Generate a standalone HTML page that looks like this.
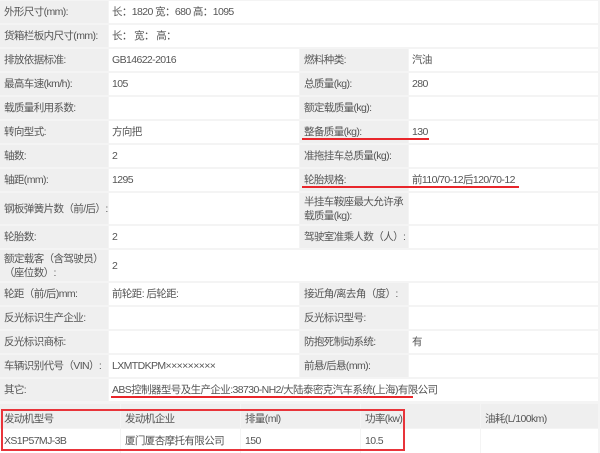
<!DOCTYPE html>
<html><head><meta charset="utf-8"><style>
body{margin:0;width:600px;height:453px;overflow:hidden;background:#f4f4f4;font-family:"Liberation Sans","Noto Sans CJK SC",sans-serif;font-size:10.5px;letter-spacing:-0.6px;color:#555;position:relative}
.c{position:absolute;box-sizing:border-box;padding-left:4px;display:flex;align-items:center;line-height:14px;white-space:nowrap;overflow:hidden}
.l{background:#efefef}
.v{background:#fff;padding-left:3px}
.h{padding-top:5px}
.r{position:absolute;background:#e8262b}
.box{position:absolute;border:2px solid #e8343a;box-sizing:border-box}
</style></head><body>
<div class="c l" style="left:0;top:1px;width:108px;height:22px">外形尺寸(mm):</div>
<div class="c v" style="left:109px;top:1px;width:489px;height:22px">长：1820 宽：680 高：1095</div>
<div class="c l" style="left:0;top:25px;width:108px;height:22px">货箱栏板内尺寸(mm):</div>
<div class="c v" style="left:109px;top:25px;width:489px;height:22px">长： 宽： 高：</div>

<div class="c l" style="left:0;top:49px;width:108px;height:22px">排放依据标准:</div>
<div class="c v" style="left:109px;top:49px;width:190px;height:22px">GB14622-2016</div>
<div class="c l" style="left:300px;top:49px;width:108px;height:22px">燃料种类:</div>
<div class="c v" style="left:409px;top:49px;width:189px;height:22px">汽油</div>

<div class="c l" style="left:0;top:73px;width:108px;height:22px">最高车速(km/h):</div>
<div class="c v" style="left:109px;top:73px;width:190px;height:22px">105</div>
<div class="c l" style="left:300px;top:73px;width:108px;height:22px">总质量(kg):</div>
<div class="c v" style="left:409px;top:73px;width:189px;height:22px">280</div>

<div class="c l" style="left:0;top:97px;width:108px;height:22px">载质量利用系数:</div>
<div class="c v" style="left:109px;top:97px;width:190px;height:22px"></div>
<div class="c l" style="left:300px;top:97px;width:108px;height:22px">额定载质量(kg):</div>
<div class="c v" style="left:409px;top:97px;width:189px;height:22px"></div>

<div class="c l" style="left:0;top:121px;width:108px;height:22px">转向型式:</div>
<div class="c v" style="left:109px;top:121px;width:190px;height:22px">方向把</div>
<div class="c l" style="left:300px;top:121px;width:108px;height:22px">整备质量(kg):</div>
<div class="c v" style="left:409px;top:121px;width:189px;height:22px">130</div>

<div class="c l" style="left:0;top:145px;width:108px;height:22px">轴数:</div>
<div class="c v" style="left:109px;top:145px;width:190px;height:22px">2</div>
<div class="c l" style="left:300px;top:145px;width:108px;height:22px">准拖挂车总质量(kg):</div>
<div class="c v" style="left:409px;top:145px;width:189px;height:22px"></div>

<div class="c l" style="left:0;top:169px;width:108px;height:22px">轴距(mm):</div>
<div class="c v" style="left:109px;top:169px;width:190px;height:22px">1295</div>
<div class="c l" style="left:300px;top:169px;width:108px;height:22px">轮胎规格:</div>
<div class="c v" style="left:409px;top:169px;width:189px;height:22px">前110/70-12后120/70-12</div>

<div class="c l" style="left:0;top:193px;width:108px;height:31px">钢板弹簧片数（前/后）:</div>
<div class="c v" style="left:109px;top:193px;width:190px;height:31px"></div>
<div class="c l" style="left:300px;top:193px;width:108px;height:31px;white-space:normal">半挂车鞍座最大允许承载质量(kg):</div>
<div class="c v" style="left:409px;top:193px;width:189px;height:31px"></div>

<div class="c l" style="left:0;top:226px;width:108px;height:22px">轮胎数:</div>
<div class="c v" style="left:109px;top:226px;width:190px;height:22px">2</div>
<div class="c l" style="left:300px;top:226px;width:108px;height:22px">驾驶室准乘人数（人）:</div>
<div class="c v" style="left:409px;top:226px;width:189px;height:22px"></div>

<div class="c l" style="left:0;top:250px;width:108px;height:31px;white-space:normal">额定载客（含驾驶员）（座位数）:</div>
<div class="c v" style="left:109px;top:250px;width:489px;height:31px">2</div>

<div class="c l" style="left:0;top:283px;width:108px;height:22px">轮距（前/后)mm:</div>
<div class="c v" style="left:109px;top:283px;width:190px;height:22px">前轮距: 后轮距:</div>
<div class="c l" style="left:300px;top:283px;width:108px;height:22px">接近角/离去角（度）:</div>
<div class="c v" style="left:409px;top:283px;width:189px;height:22px"></div>

<div class="c l" style="left:0;top:307px;width:108px;height:22px">反光标识生产企业:</div>
<div class="c v" style="left:109px;top:307px;width:190px;height:22px"></div>
<div class="c l" style="left:300px;top:307px;width:108px;height:22px">反光标识型号:</div>
<div class="c v" style="left:409px;top:307px;width:189px;height:22px"></div>

<div class="c l" style="left:0;top:331px;width:108px;height:22px">反光标识商标:</div>
<div class="c v" style="left:109px;top:331px;width:190px;height:22px"></div>
<div class="c l" style="left:300px;top:331px;width:108px;height:22px">防抱死制动系统:</div>
<div class="c v" style="left:409px;top:331px;width:189px;height:22px">有</div>

<div class="c l" style="left:0;top:355px;width:108px;height:22px">车辆识别代号（VIN）:</div>
<div class="c v" style="left:109px;top:355px;width:190px;height:22px">LXMTDKPM×××××××××</div>
<div class="c l" style="left:300px;top:355px;width:108px;height:22px">前悬/后悬(mm):</div>
<div class="c v" style="left:409px;top:355px;width:189px;height:22px"></div>

<div class="c l" style="left:0;top:379px;width:108px;height:22px">其它:</div>
<div class="c v" style="left:109px;top:379px;width:489px;height:22px">ABS控制器型号及生产企业:38730-NH2/大陆泰密克汽车系统(上海)有限公司</div>

<div class="c l h" style="left:0;top:404px;width:120px;height:24px">发动机型号</div>
<div class="c l h" style="left:121px;top:404px;width:119px;height:24px">发动机企业</div>
<div class="c l h" style="left:241px;top:404px;width:119px;height:24px">排量(ml)</div>
<div class="c l h" style="left:361px;top:404px;width:119px;height:24px">功率(kw)</div>
<div class="c l h" style="left:481px;top:404px;width:117px;height:24px">油耗(L/100km)</div>
<div class="c v" style="left:0;top:429px;width:120px;height:24px;padding-left:4px">XS1P57MJ-3B</div>
<div class="c v" style="left:121px;top:429px;width:119px;height:24px;padding-left:4px">厦门厦杏摩托有限公司</div>
<div class="c v" style="left:241px;top:429px;width:119px;height:24px;padding-left:4px">150</div>
<div class="c v" style="left:361px;top:429px;width:119px;height:24px;padding-left:4px">10.5</div>
<div class="c v" style="left:481px;top:429px;width:117px;height:24px"></div>

<div class="r" style="left:302px;top:138px;width:127px;height:2px"></div>
<div class="r" style="left:302px;top:186px;width:217px;height:2px"></div>
<div class="r" style="left:111px;top:396px;width:302px;height:2px"></div>
<div class="box" style="left:1px;top:409px;width:404px;height:42px"></div>
</body></html>
